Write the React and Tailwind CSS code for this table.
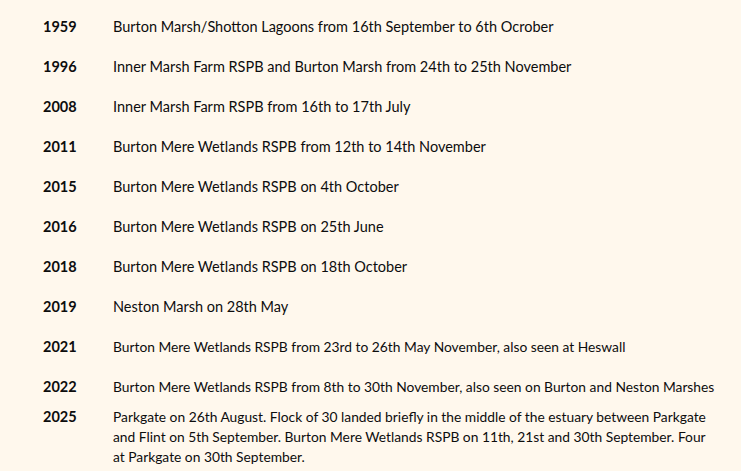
import React from "react";

const rows = [
  ["1959", "Burton Marsh/Shotton Lagoons from 16th September to 6th Ocrober", "big"],
  ["1996", "Inner Marsh Farm RSPB and Burton Marsh from 24th to 25th November", "big"],
  ["2008", "Inner Marsh Farm RSPB from 16th to 17th July", "big"],
  ["2011", "Burton Mere Wetlands RSPB from 12th to 14th November", "big"],
  ["2015", "Burton Mere Wetlands RSPB on 4th October", "big"],
  ["2016", "Burton Mere Wetlands RSPB on 25th June", "big"],
  ["2018", "Burton Mere Wetlands RSPB on 18th October", "big"],
  ["2019", "Neston Marsh on 28th May", "big"],
  ["2021", "Burton Mere Wetlands RSPB from 23rd to 26th May November, also seen at Heswall", "small"],
  ["2022", "Burton Mere Wetlands RSPB from 8th to 30th November, also seen on Burton and Neston Marshes", "small"],
];

export default function App() {
  return (
    <div
      className="w-[741px] h-[471px] bg-[#fff8ed] text-[#0d0d0d] pt-[7px] overflow-hidden"
      style={{ fontFamily: "Lato, 'Liberation Sans', sans-serif" }}
    >
      {rows.map(([y, t, s]) => (
        <div key={y} className="flex items-center h-10">
          <div className="w-[113px] pl-[43px] font-bold text-[14.5px] shrink-0">{y}</div>
          <div className={s === "big" ? "text-[14.5px]" : "text-[13.8px]"}>{t}</div>
        </div>
      ))}
      <div className="flex items-start">
        <div className="w-[113px] pl-[43px] font-bold text-[14.5px] leading-5 shrink-0">2025</div>
        <div className="text-[13.8px] leading-5 w-[606px]">
          Parkgate on 26th August. Flock of 30 landed briefly in the middle of the estuary between Parkgate and Flint on 5th September. Burton Mere Wetlands RSPB on 11th, 21st and 30th September. Four at Parkgate on 30th September.
        </div>
      </div>
    </div>
  );
}
